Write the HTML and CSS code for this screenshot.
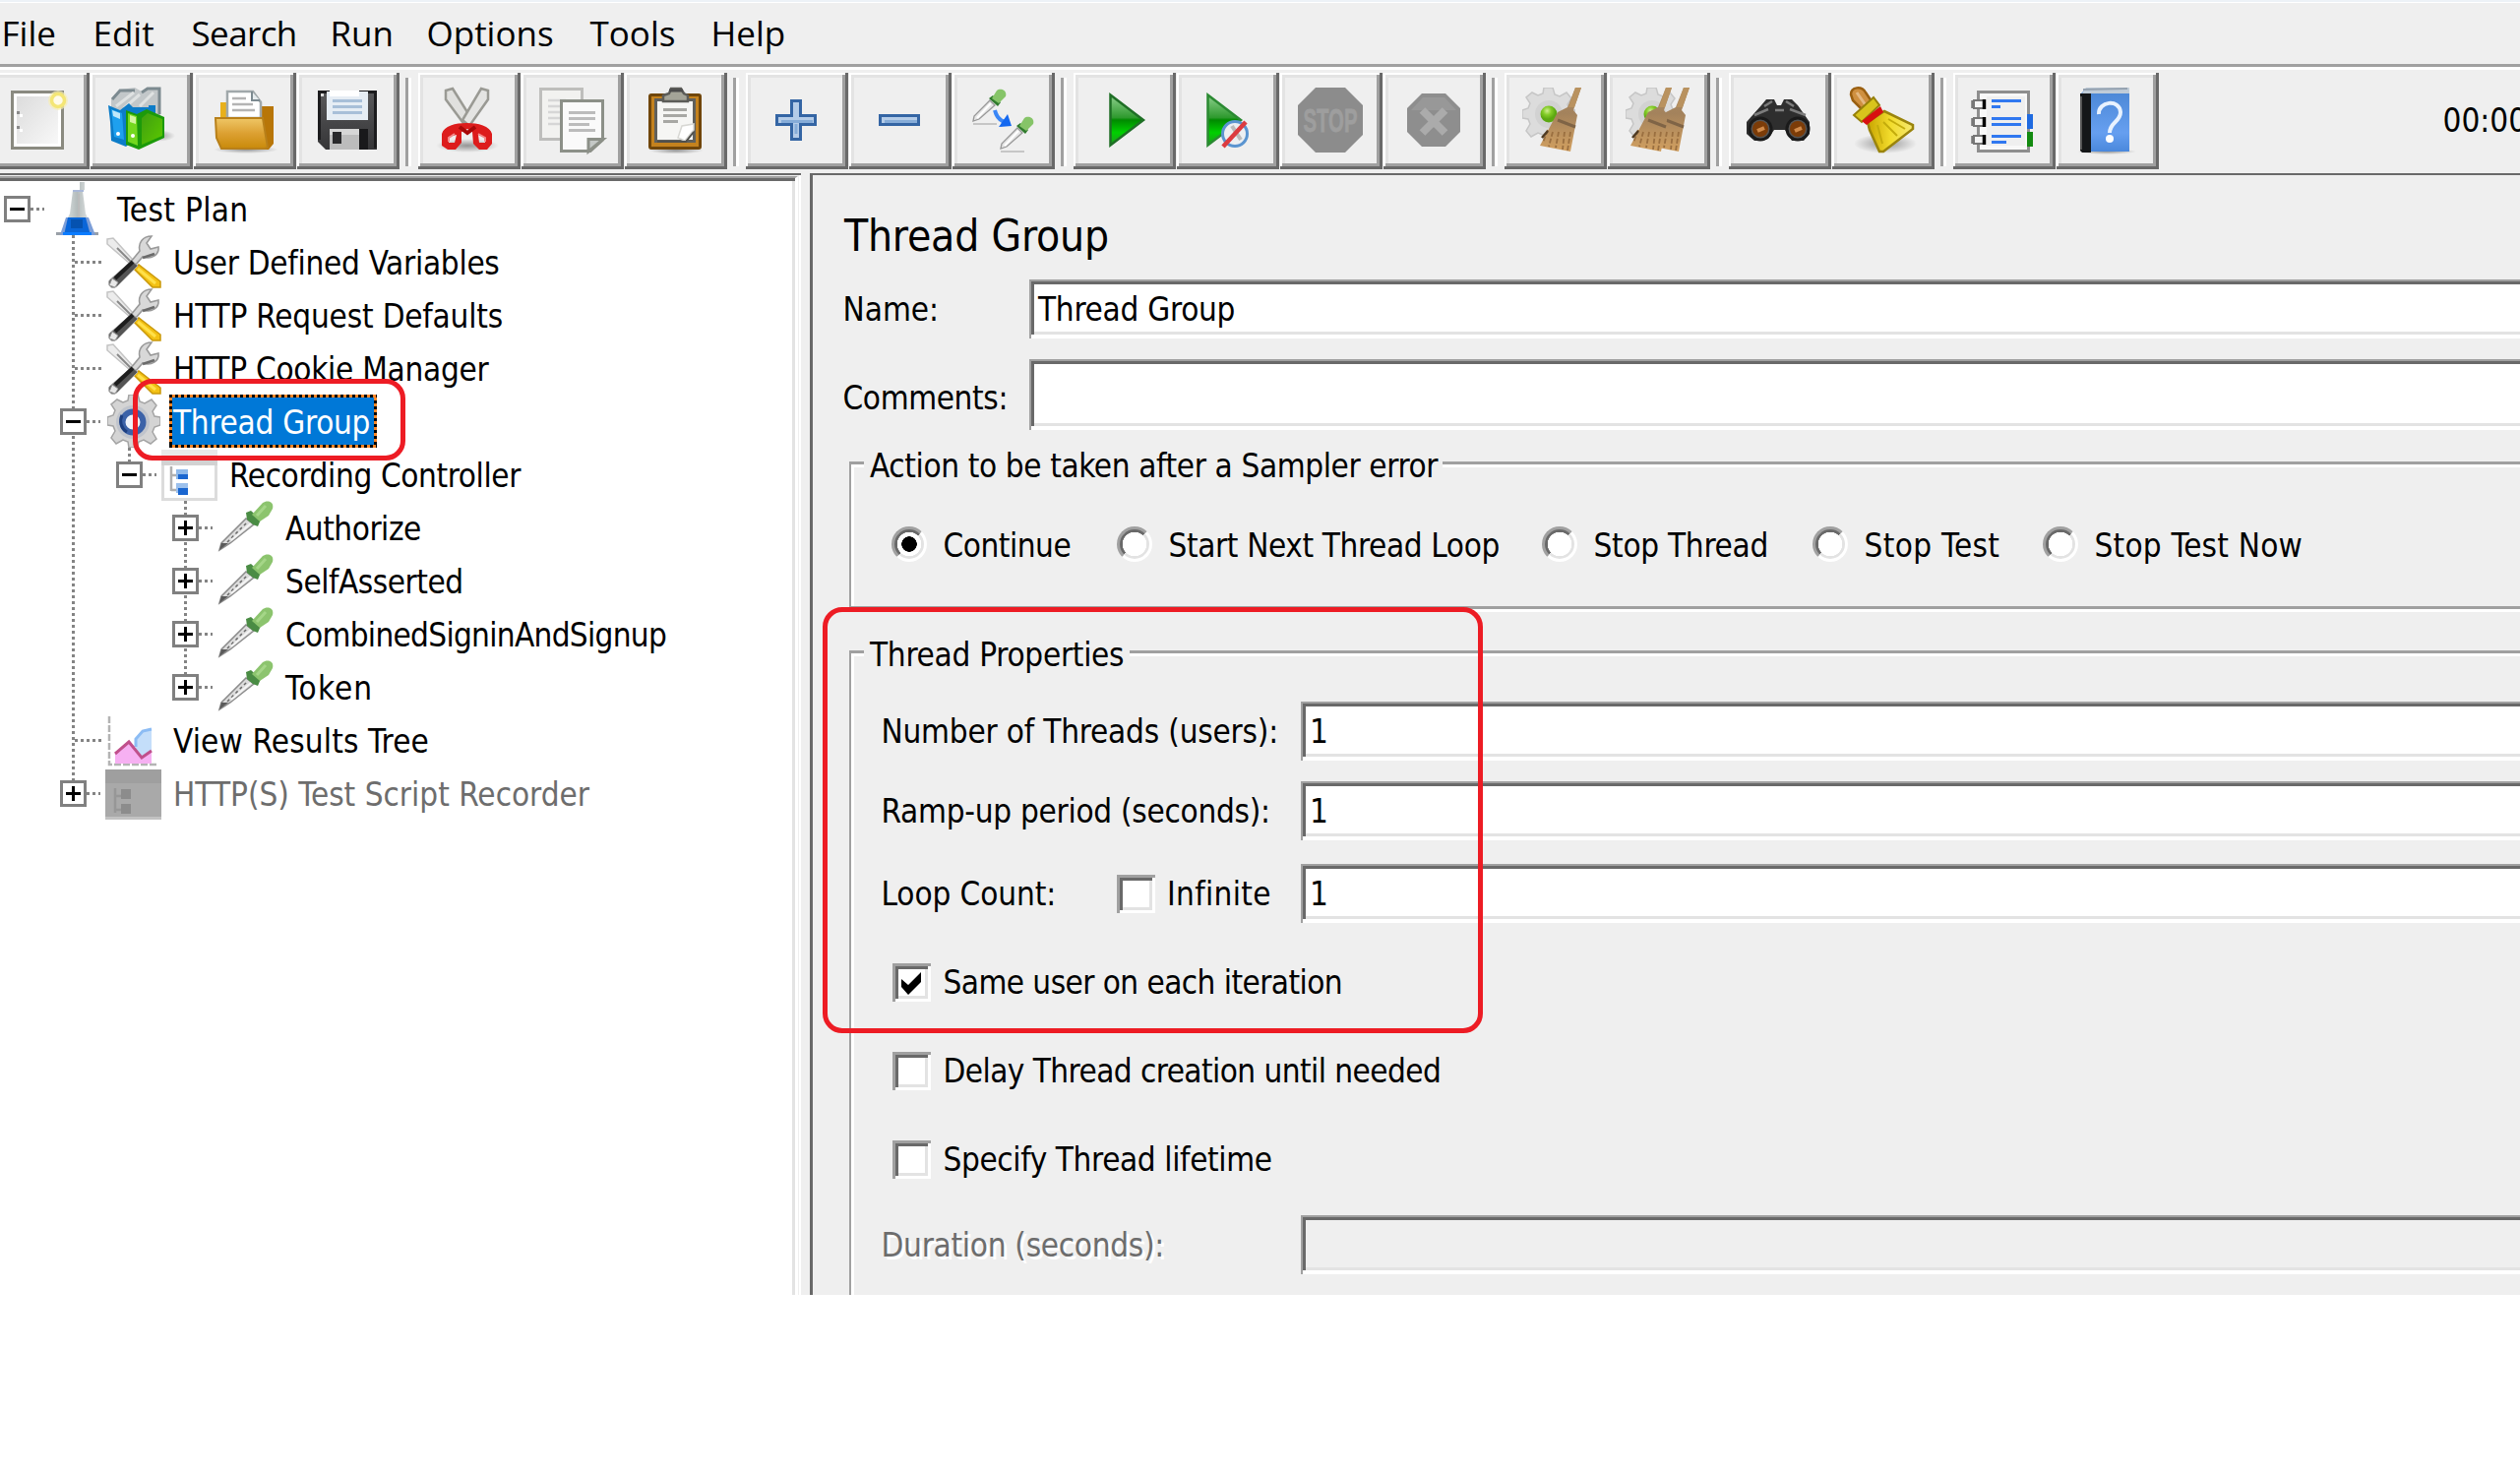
FILE: index.html
```html
<!DOCTYPE html>
<html lang="en">
<head>
<meta charset="utf-8">
<title>Apache JMeter</title>
<link rel="stylesheet" href="styles.css">
</head>
<body>
<svg class="defs" width="0" height="0" aria-hidden="true">
  <defs>
    <linearGradient id="g-green" x1="0" y1="0" x2="0" y2="1"><stop offset="0" stop-color="#8fd08f"/><stop offset=".45" stop-color="#2e9a2e"/><stop offset=".5" stop-color="#008a00"/><stop offset=".75" stop-color="#00d000"/><stop offset="1" stop-color="#1e9a1e"/></linearGradient>
    <linearGradient id="g-folder" x1="0" y1="0" x2="0" y2="1"><stop offset="0" stop-color="#efc766"/><stop offset=".5" stop-color="#dca032"/><stop offset="1" stop-color="#c98a0a"/></linearGradient>
    <linearGradient id="g-doc" x1="0" y1="0" x2="1" y2="1"><stop offset="0" stop-color="#dcdcdc"/><stop offset="1" stop-color="#f8f8f8"/></linearGradient>
    <linearGradient id="g-blue" x1="0" y1="0" x2="0" y2="1"><stop offset="0" stop-color="#4a86d4"/><stop offset=".7" stop-color="#669ff0"/><stop offset="1" stop-color="#4a88dc"/></linearGradient>
    <linearGradient id="g-disc" x1="0" y1="0" x2="0" y2="1"><stop offset="0" stop-color="#5a5a5c"/><stop offset="1" stop-color="#353537"/></linearGradient>
    <linearGradient id="g-glass" x1="0" y1="0" x2="1" y2="0"><stop offset="0" stop-color="#eef2f2"/><stop offset=".5" stop-color="#b4bcbc"/><stop offset="1" stop-color="#f2f4f4"/></linearGradient>
    <linearGradient id="g-bin" x1="0" y1="0" x2="1" y2="1"><stop offset="0" stop-color="#3f9f10"/><stop offset="1" stop-color="#5cc800"/></linearGradient>
    <linearGradient id="g-broom" x1="0" y1="0" x2="1" y2="0"><stop offset="0" stop-color="#c8a400"/><stop offset=".5" stop-color="#f2dc2c"/><stop offset="1" stop-color="#f6e870"/></linearGradient>
    <radialGradient id="g-ball" cx=".4" cy=".3"><stop offset="0" stop-color="#d0ee90"/><stop offset=".5" stop-color="#84cc28"/><stop offset="1" stop-color="#5ca812"/></radialGradient>
    <radialGradient id="g-shadow"><stop offset="0" stop-color="#000" stop-opacity=".38"/><stop offset="1" stop-color="#000" stop-opacity="0"/></radialGradient>
    <linearGradient id="g-straw" x1="0" y1="0" x2="0" y2="1"><stop offset="0" stop-color="#b08e64"/><stop offset=".4" stop-color="#a3825c"/><stop offset="1" stop-color="#d2a060"/></linearGradient>

    <symbol id="mini-dropper" viewBox="0 0 36 37">
      <path d="M2 36H26" stroke="#b8b8b8" stroke-width="1.5"/>
      <path d="M2 33L3 28L19 12L24 17L8 31Z" fill="#e6e6e6" stroke="#989898" stroke-width="1.3"/>
      <path d="M6 30L20 15" stroke="#fff" stroke-width="2"/>
      <path d="M18 10L22 7L30 14L27 18Z" fill="#2f7a2c"/>
      <path d="M21 10L26 2C29 -1 37 1 35 8L28 15Z" fill="#86c468"/>
    </symbol>

    <symbol id="gear-shape" viewBox="0 0 54 54">
      <path d="M22 0H31L33 7L38 9L45 5L50 11L46 17L48 22L54 23V31L48 33L46 38L50 45L44 50L37 46L32 48L30 54H22L21 48L16 46L9 50L4 44L8 37L6 32L0 31V23L6 21L8 16L4 10L10 5L16 8L21 6Z"/>
    </symbol>

    <symbol id="straw-broom" viewBox="0 0 46 68">
      <path d="M38 1L44 1L36 24L40 29L33 66L2 60L20 26L30 21Z" fill="url(#g-straw)"/>
      <path d="M38 1L44 1L37 21L31 21Z" fill="#b9925f"/>
      <path d="M20 34L38 41" stroke="#7f6446" stroke-width="3"/>
      <path d="M10 44L5 57M15 46L11 61M21 46L18 62M27 46L25 64M33 46L30 65" stroke="#9a6f40" stroke-width="1.8" stroke-dasharray="5 2"/>
      <path d="M4 52L10 45" stroke="#4f3a22" stroke-width="2.5"/>
    </symbol>

    <symbol id="i-tools" viewBox="0 0 57 54">
      <path d="M2 4L8 3L28 25L25 29L2 9Z" fill="#ececec" stroke="#c4c4c4" stroke-width="1.5"/>
      <path d="M12 13L28 29" stroke="#888" stroke-width="2"/>
      <path d="M29 34L34 30L56 47V53H48Z" fill="#f3c114" stroke="#c9980a" stroke-width="1.5"/>
      <path d="M33 34L51 49" stroke="#ffe04a" stroke-width="3"/>
      <path d="M35 16C33 8 38 1 47 1L42 8L46 14L54 12C55 20 47 25 38 22L30 31L26 27Z" fill="#d8d8d8" stroke="#9a9a9a" stroke-width="1.6"/>
      <path d="M38 23L50 19" stroke="#6a6a6a" stroke-width="2.5"/>
      <path d="M27 26L33 31L13 51C8 56 2 53 4 46Z" fill="#555" stroke="#aaa" stroke-width="1"/>
      <path d="M10 44L28 27" stroke="#1e1e1e" stroke-width="4"/>
      <path d="M4 51L7 44L13 48L10 53Z" fill="#e8e8e8" stroke="#999"/>
    </symbol>

    <symbol id="i-dropper" viewBox="0 0 57 54">
      <path d="M2 50L4 43L29 18L37 24L13 43Z" fill="#dcdcdc" stroke="#8c8c8c" stroke-width="1.5"/>
      <path d="M10 42L30 22" stroke="#6a6a6a" stroke-width="1.5" stroke-dasharray="3 3"/>
      <path d="M14 40L34 23" stroke="#f4f4f4" stroke-width="2"/>
      <path d="M2 50L4 43L11 43Z" fill="#5a5a5a"/>
      <path d="M29 12L34 10L44 19L41 26L36 24L30 19Z" fill="#4a8c44"/>
      <path d="M35 14L46 2C50 -1 58 0 56 8L52 15L43 21Z" fill="#8cc46e"/>
      <path d="M40 15L49 5" stroke="#a5d688" stroke-width="3"/>
    </symbol>
  </defs>
</svg>

<div class="app">
  <nav class="menubar">
    <span>File</span><span>Edit</span><span class="search">Search</span><span>Run</span><span>Options</span><span>Tools</span><span>Help</span>
  </nav>

  <div class="toolbar">
    <button class="tool"><svg viewBox="0 0 104 98">
      <rect x="25.500" y="19.500" width="51" height="57" fill="#fff" stroke="#8a8a80" stroke-width="3"/>
      <rect x="30" y="24" width="42" height="48" fill="url(#g-doc)"/>
      <path d="M30 39h3v3h-3zM30 54h3v3h-3z" fill="#8a8a8a"/><path d="M33 42h3v3h-3zM33 57h3v3h-3z" fill="#fff"/>
      <circle cx="72" cy="28" r="10" fill="#f6eeb0" opacity=".7"/><circle cx="72" cy="28" r="6.500" fill="#fffbe8" stroke="#f4e676" stroke-width="3.500"/>
    </svg></button>
    <button class="tool"><svg viewBox="0 0 104 98">
      <ellipse cx="68" cy="64" rx="18" ry="6" fill="url(#g-shadow)"/>
      <path d="M21 36V27L30 17L45 15L52 19L57 15H71V45H21Z" fill="#c2c7c9"/>
      <path d="M22 27L30 18H45M52 20L58 16H70V42" stroke="#7c8a90" stroke-width="3" fill="none"/>
      <path d="M26 34L44 20M34 36L50 22M50 34L64 20" stroke="#dfe2e2" stroke-width="3" fill="none"/>
      <path d="M18 33L30 38L39 31L43 35H59V33H66V50L36 75L21 69L20 50Z" fill="#0c7cc8"/>
      <path d="M21 37L32 41L34 68L24 65Z" fill="#1ea0ee"/><path d="M22 38L30 41V47L23 44Z" fill="#c0e8fa"/><circle cx="28" cy="62" r="2" fill="#fff"/>
      <path d="M36 38L47 42L57 37L75 45V66L49 78L36 73Z" fill="#1c9a0a"/>
      <path d="M38 41L47 44L48 74L38 70Z" fill="#74d81e"/><path d="M40 43L46 45V52L40 50Z" fill="#d4f4a0"/>
      <path d="M52 46L58 41L73 47V64L52 73Z" fill="url(#g-bin)"/><circle cx="43" cy="64" r="2" fill="#fff"/>
    </svg></button>
    <button class="tool"><svg viewBox="0 0 104 98">
      <ellipse cx="53" cy="78" rx="33" ry="4" fill="url(#g-shadow)"/>
      <path d="M27 46V30H34V34L70 34H81V72L76 78H66Z" fill="#b87608"/><path d="M27 46V30H33V46Z" fill="#e8b01c"/>
      <path d="M34 46V19H60L68 30V46Z" fill="#fff" stroke="#a0a8aa" stroke-width="2.500"/><path d="M59 19V28H67" fill="#e6ecee" stroke="#7c8a90" stroke-width="2"/>
      <path d="M39 26H53M39 32H60M39 38H62" stroke="#b4b4b4" stroke-width="2.500"/>
      <path d="M22 46H70L75 76L72 77H28L23 66Z" fill="url(#g-folder)" stroke="#b8801a" stroke-width="2"/>
    </svg></button>
    <button class="tool"><svg viewBox="0 0 104 98">
      <path d="M21 18H81V78H29L21 70Z" fill="url(#g-disc)"/><path d="M22.500 68V19.500H79.500V76.500" fill="none" stroke="#1c1c1e" stroke-width="3"/>
      <rect x="30" y="19" width="42" height="29" fill="#e6edf4"/><rect x="33" y="18" width="30" height="6" fill="#fff"/>
      <path d="M36 28.500H66M36 34.500H66M36 40.500H66" stroke="#a8bfd8" stroke-width="3"/>
      <rect x="33" y="57" width="33" height="21" fill="#bcbcbc"/><path d="M33 57H63V63H33Z" fill="#d6d6d6"/><rect x="36" y="60" width="9" height="12" fill="#2a2a2c"/><rect x="63" y="57" width="9" height="21" fill="#19191b"/>
      <rect x="24" y="21" width="3" height="3" fill="#ddd"/>
    </svg></button>
    <i class="sep"></i>
    <button class="tool"><svg viewBox="0 0 104 98">
      <ellipse cx="50" cy="74" rx="32" ry="7" fill="url(#g-shadow)"/>
      <path d="M28 18L35 16L55 48L48 54L28 27Z" fill="#e0e0de" stroke="#9a9a94" stroke-width="2.500"/>
      <path d="M71 18L64 16L45 48L52 54L71 27Z" fill="#e4e4e2" stroke="#9a9a94" stroke-width="2.500"/>
      <path fill-rule="evenodd" d="M24 62C26 54 38 51 49 51C61 51 73 54 75 62V72L70 78H62L56 72L55 60L50 57L44 60V71L38 78H30L24 74ZM31 65V71H37L39 63ZM61 63L62 71H68V66Z" fill="#dd1c1c"/>
      <path d="M42 55L50 61L58 55" stroke="#a80808" stroke-width="4" fill="none"/><path d="M31 70V66L37 62M68 70V66L61 62" stroke="#f48a8a" stroke-width="2" fill="none"/>
    </svg></button>
    <button class="tool"><svg viewBox="0 0 104 98">
      <rect x="19.500" y="16.500" width="42" height="51" fill="#f2f2f0" stroke="#bebebc" stroke-width="3"/><path d="M27 28H45M27 34H45M27 40H45M27 46H45M27 52H40" stroke="#d6d6d6" stroke-width="2.500"/>
      <path d="M40.500 28.500H82.500V68L70 79.500H40.500Z" fill="#fafafa" stroke="#8c9088" stroke-width="3"/><path d="M48 40.500H75M48 46.500H75M48 52.500H69M48 58.500H75" stroke="#bcbcbc" stroke-width="3"/>
      <path d="M68 80V67.500H83Z" fill="#c4c8c6" stroke="#8c9088" stroke-width="3"/>
    </svg></button>
    <button class="tool"><svg viewBox="0 0 104 98">
      <ellipse cx="52" cy="79" rx="28" ry="3.500" fill="url(#g-shadow)"/>
      <rect x="25.500" y="22.500" width="51" height="54" rx="1.500" fill="#c4821e" stroke="#70460a" stroke-width="3"/>
      <rect x="31.500" y="27.500" width="39" height="42" fill="#f6f6f4" stroke="#60605c" stroke-width="3"/>
      <path d="M39 37.500H63M39 43.500H63M39 49.500H54" stroke="#a8a8a4" stroke-width="3"/>
      <path d="M54 66L58 54L70 52V58L61 69Z" fill="#fff" stroke="#d8d8d4" stroke-width="1.500"/><path d="M33 70L62 70L70 60" stroke="#50504c" stroke-width="2" fill="none"/>
      <path d="M39 29V23L45 21L47 16H57L60 21L64 23V29Z" fill="#a4a498" stroke="#5c5c58" stroke-width="2.500"/><path d="M45 18H59" stroke="#4c4c4c" stroke-width="3"/>
    </svg></button>
    <i class="sep"></i>
    <button class="tool"><svg viewBox="0 0 104 98">
      <path d="M46.500 28.500H55.500V43.500H70.500V52.500H55.500V67.500H46.500V52.500H31.500V43.500H46.500Z" fill="#b4cce8" stroke="#3465a4" stroke-width="3"/><path d="M36 49.500H68M51 52V62" stroke="#86acd8" stroke-width="3"/>
    </svg></button>
    <button class="tool"><svg viewBox="0 0 104 98">
      <rect x="31.500" y="43.500" width="39" height="9" fill="#b4cce8" stroke="#3465a4" stroke-width="3"/><path d="M36 49.500H69" stroke="#86acd8" stroke-width="3"/>
    </svg></button>
    <button class="tool"><svg viewBox="0 0 104 98">
      <use href="#mini-dropper" x="19" y="16" width="36" height="37"/><use href="#mini-dropper" x="47" y="44" width="36" height="37"/>
      <path d="M43 38C45 46 49 49 54 50" fill="none" stroke="#3a86f6" stroke-width="4"/><path d="M56 42L60 54L47 55Z" fill="#1468f0"/>
    </svg></button>
    <i class="sep"></i>
    <button class="tool"><svg viewBox="0 0 104 98"><path d="M37.500 22.500L71 48L37.500 73.500Z" fill="url(#g-green)" stroke="#1f6f26" stroke-width="2.500"/></svg></button>
    <button class="tool"><svg viewBox="0 0 104 98"><path d="M31.500 22.500L65 48L31.500 73.500Z" fill="url(#g-green)" stroke="#2b8a32" stroke-width="2.500"/>
      <circle cx="59" cy="62" r="12.500" fill="#eceff2" stroke="#5a94d0" stroke-width="3"/><path d="M56 54L65 68" stroke="#bbb" stroke-width="4"/><path d="M47 75L70 50" stroke="#dc3c40" stroke-width="4.500"/>
    </svg></button>
    <button class="tool"><svg viewBox="0 0 104 98">
      <path d="M36 15H66L84 33V63L66 81H36L18 63V33Z" fill="#8c8c8c"/><text class="stop-word" x="51" y="60" textLength="55" lengthAdjust="spacingAndGlyphs">STOP</text>
    </svg></button>
    <button class="tool"><svg viewBox="0 0 104 98">
      <path d="M39 21H63L78 36V60L63 75H39L24 60V36Z" fill="#8e8e8e"/><path d="M40 25H62L74 38H28Z" fill="#989898"/><path d="M39.500 38L62.500 61M62.500 38L39.500 61" stroke="#ababab" stroke-width="8"/>
    </svg></button>
    <i class="sep"></i>
    <button class="tool"><svg viewBox="0 0 104 98">
      <use href="#gear-shape" x="18" y="15" width="54" height="54" fill="#dcdcdc" stroke="#c6c6c6" stroke-width="1.500"/><circle cx="45" cy="42" r="14" fill="#d2d2d2"/><circle cx="45" cy="42" r="8.500" fill="url(#g-ball)"/>
      <use href="#straw-broom" x="34" y="14" width="46" height="68"/>
    </svg></button>
    <button class="tool"><svg viewBox="0 0 104 98">
      <use href="#gear-shape" x="18" y="15" width="54" height="54" fill="#dcdcdc" stroke="#c6c6c6" stroke-width="1.500"/><circle cx="45" cy="42" r="14" fill="#d2d2d2"/><circle cx="45" cy="42" r="8.500" fill="url(#g-ball)"/>
      <use href="#straw-broom" x="39" y="14" width="46" height="68"/><use href="#straw-broom" x="21" y="14" width="46" height="68"/>
    </svg></button>
    <i class="sep"></i>
    <button class="tool"><svg viewBox="0 0 104 98">
      <path d="M33 33L38 27H46L49 33H53L56 27H64L70 33L82 50V62L76 69H64L57 58H46L40 67L34 69H26L18 62V50Z" fill="#2e2e2e"/>
      <path d="M36 34L44 29M58 29L66 34M26 43L40 37M62 37L78 43M47 38H56" stroke="#7c7c7c" stroke-width="2.500"/>
      <circle cx="32" cy="57" r="11" fill="#555" stroke="#1a1a1a" stroke-width="3"/><circle cx="70" cy="57" r="11" fill="#555" stroke="#1a1a1a" stroke-width="3"/>
      <circle cx="32" cy="57" r="8" fill="#7c3c08"/><circle cx="70" cy="57" r="8" fill="#7c3c08"/><path d="M29 59L36 56M67 59L74 56" stroke="#d08a4a" stroke-width="4"/>
    </svg></button>
    <button class="tool"><svg viewBox="0 0 104 98">
      <ellipse cx="54" cy="72" rx="32" ry="10" fill="url(#g-shadow)"/>
      <path d="M19 22C19 14 30 13 34 20L42 32L32 39L21 28Z" fill="#cf9040" stroke="#9a5f10" stroke-width="2.500"/><path d="M25 20L34 33" stroke="#e4b880" stroke-width="3"/>
      <path d="M22 43L42 25L48 33L30 50Z" fill="#d8c41c" stroke="#96800a" stroke-width="2"/>
      <path d="M36 50L53 39L82 53V57L52 80H48L38 58Z" fill="url(#g-broom)" stroke="#9a840c" stroke-width="2.500"/><path d="M46 53L51 72M52 50L66 64M57 47L74 57" stroke="#c4ac0c" stroke-width="2"/>
      <path d="M30 49L49 34L52 40L35 53Z" fill="#d81010"/>
    </svg></button>
    <i class="sep"></i>
    <button class="tool"><svg viewBox="0 0 104 98">
      <rect x="25.500" y="19.500" width="51" height="60" fill="#f8f8f8" stroke="#8e8e8e" stroke-width="3"/><rect x="34" y="24" width="39" height="50" fill="#efefef"/>
      <path d="M39 28.500H69M39 34.500H48M39 46.500H69M39 52.500H69M39 64.500H69M39 70.500H54" stroke="#3078f0" stroke-width="3"/>
      <path d="M75 42H81V57H75Z" fill="#1f6ae0"/><path d="M75 60H81V75H75Z" fill="#138a10"/>
      <g fill="#f4f4f4" stroke="#777" stroke-width="2"><path d="M21 28H31V36H21ZM21 46H31V54H21ZM21 64H31V72H21Z"/></g>
      <path d="M31.500 27V37M31.500 45V55M31.500 63V73" stroke="#000" stroke-width="3.500"/><path d="M20 28V36M20 46V54M20 64V72" stroke="#777" stroke-width="3.500"/>
    </svg></button>
    <button class="tool"><svg viewBox="0 0 104 98">
      <ellipse cx="51" cy="80" rx="30" ry="3" fill="url(#g-shadow)"/>
      <path d="M24 22L30 16H74V80H26L24 78Z" fill="url(#g-blue)"/><path d="M24 21H35V81H26L24 79Z" fill="#141618"/><path d="M25 24V78" stroke="#555" stroke-width="2"/>
      <path d="M26 21L30 15H74V21Z" fill="#c0ccd8"/><path d="M27 17L72 16" stroke="#95a2b0" stroke-width="2"/>
      <path d="M43 42C42 29 64 26 65 40C65 50 54 50 54 61" fill="none" stroke="#e8f2ff" stroke-width="4"/><circle cx="54" cy="67" r="4" fill="#fff"/>
    </svg></button>
    <span class="clock">00:00:00</span>
  </div>

  <div class="workspace">
    <aside class="tree-pane">
      <ul class="tree">
        <li><i class="node root minus"></i>
          <svg class="icon" viewBox="0 0 57 54"><path d="M24 8H31V0H36V8L34 9L37 32L46 52H11L21 32L24 9Z" fill="url(#g-glass)"/><path d="M24 9H35" stroke="#a9b8d8" stroke-width="2"/><path d="M30 12V36" stroke="#bbb" stroke-width="2"/><path d="M7 52.500H50" stroke="#9aa0a8" stroke-width="3"/><path d="M17 36H40L47 54H11Z" fill="#7c9ed8"/><path d="M19 36H37L42 54H15Z" fill="#0a66d8"/><path d="M22 38H34V47H22Z" fill="#0552b0"/><path d="M14 51H43V54H14Z" fill="#0a7cff"/></svg>
          <span class="label wide-3">Test Plan</span></li>
        <li><i class="node root"></i><i class="node line tee"></i><svg class="icon" viewBox="0 0 57 54"><use href="#i-tools"/></svg><span class="label tight-3">User Defined Variables</span></li>
        <li><i class="node root"></i><i class="node line tee"></i><svg class="icon" viewBox="0 0 57 54"><use href="#i-tools"/></svg><span class="label tight-2">HTTP Request Defaults</span></li>
        <li><i class="node root"></i><i class="node line tee"></i><svg class="icon" viewBox="0 0 57 54"><use href="#i-tools"/></svg><span class="label tight-3">HTTP Cookie Manager</span></li>
        <li><i class="node root"></i><i class="node line minus"></i>
          <svg class="icon" viewBox="0 0 57 54"><use href="#gear-shape" x="2" y="0" width="54" height="54" fill="#d4d4d4" stroke="#a4a4a4" stroke-width="1.500"/><circle cx="28" cy="28" r="17" fill="#c0c4cc"/><circle cx="28" cy="28" r="10.500" fill="#eef2fa" stroke="#3c62a8" stroke-width="6"/><path d="M17 21A13 13 0 0 0 22 38" stroke="#1d3f80" stroke-width="3" fill="none"/></svg>
          <span class="label selected tight-3">Thread Group</span></li>
        <li><i class="node root"></i><i class="node line"></i><i class="node line last minus"></i>
          <svg class="icon" viewBox="0 0 57 54"><rect x="1.500" y="4.500" width="54" height="48" fill="#fff" stroke="#dcdcdc" stroke-width="3"/><rect x="0" y="2" width="57" height="16" fill="#e8e8e8"/><rect x="0" y="13" width="57" height="5" fill="#d2d2d2"/><path d="M10 19V44M10 28H16M10 43H16" stroke="#b0b0b0" stroke-width="2.500" fill="none"/><path d="M15 22H27V32H15Z" fill="#8fb9ea"/><path d="M17 27H27V32H17Z" fill="#1a66d0"/><path d="M15 36H27V46H15Z" fill="#9cc0ec"/><path d="M17 41H27V48H17Z" fill="#1a66d0"/></svg>
          <span class="label tight-4">Recording Controller</span></li>
        <li><i class="node root"></i><i class="node line"></i><i class="node"></i><i class="node line plus"></i><svg class="icon" viewBox="0 0 57 54"><use href="#i-dropper"/></svg><span class="label tight-5">Authorize</span></li>
        <li><i class="node root"></i><i class="node line"></i><i class="node"></i><i class="node line plus"></i><svg class="icon" viewBox="0 0 57 54"><use href="#i-dropper"/></svg><span class="label tight-5">SelfAsserted</span></li>
        <li><i class="node root"></i><i class="node line"></i><i class="node"></i><i class="node line plus"></i><svg class="icon" viewBox="0 0 57 54"><use href="#i-dropper"/></svg><span class="label tight-7">CombinedSigninAndSignup</span></li>
        <li><i class="node root"></i><i class="node line"></i><i class="node"></i><i class="node line last plus"></i><svg class="icon" viewBox="0 0 57 54"><use href="#i-dropper"/></svg><span class="label wide-9">Token</span></li>
        <li><i class="node root"></i><i class="node line tee"></i>
          <svg class="icon" viewBox="0 0 57 54"><path d="M4 3V52H52" stroke="#b4b4b4" stroke-width="2.500" fill="none" stroke-dasharray="7 2"/><path d="M31 44V26L38 17L47 15V45Z" fill="#c4defa"/><path d="M31 34V26L38 18L47 16" stroke="#8cbcf4" stroke-width="3" fill="none"/><path d="M10 51V41L24 30L37 44L47 39V51Z" fill="#f6b0f2"/><path d="M10 41L24 29L37 45L47 38" stroke="#c0508c" stroke-width="3" fill="none"/></svg>
          <span class="label wide-1">View Results Tree</span></li>
        <li><i class="node root"></i><i class="node line last plus"></i>
          <svg class="icon" viewBox="0 0 57 54"><rect y="3" width="57" height="51" fill="#a9a9a9"/><rect y="3" width="57" height="14" fill="#9f9f9f"/><rect y="51" width="57" height="3" fill="#c2c2c2"/><path d="M10 22V47M10 30H16M10 44H16" stroke="#979797" stroke-width="2.500" fill="none"/><path d="M16 23H26V33H16ZM16 38H26V48H16Z" fill="#8c8c8c"/></svg>
          <span class="label off">HTTP(S) Test Script Recorder</span></li>
      </ul>
    </aside>

    <main class="editor">
      <h1 class="tight-2">Thread Group</h1>
      <div class="form-row name-row"><label>Name:</label><div class="field tight-3">Thread Group</div></div>
      <div class="form-row comments-row"><label class="tight-4">Comments:</label><div class="field"></div></div>

      <section class="group action-group">
        <div class="legend tight-4">Action to be taken after a Sampler error</div>
        <div class="radios">
          <span class="radio tight-5"><i class="knob on"></i>Continue</span>
          <span class="radio tight-4"><i class="knob"></i>Start Next Thread Loop</span>
          <span class="radio tight-3"><i class="knob"></i>Stop Thread</span>
          <span class="radio wide-3"><i class="knob"></i>Stop Test</span>
          <span class="radio wide-2"><i class="knob"></i>Stop Test Now</span>
        </div>
      </section>

      <section class="group props-group">
        <div class="legend tight-3">Thread Properties</div>
        <div class="prop-row threads"><label class="tight-2">Number of Threads (users):</label><div class="field">1</div></div>
        <div class="prop-row ramp"><label class="tight-3">Ramp-up period (seconds):</label><div class="field">1</div></div>
        <div class="prop-row loops"><label class="short tight-1">Loop Count:</label><span class="check wide-3"><i class="box"></i>Infinite</span><div class="field">1</div></div>
        <div class="check tight-6"><i class="box"><svg viewBox="0 0 27 27"><path d="M3 10L10 16L23 3V13L10 26L3 18Z"/></svg></i>Same user on each iteration</div>
        <div class="check tight-6"><i class="box"></i>Delay Thread creation until needed</div>
        <div class="check tight-4"><i class="box"></i>Specify Thread lifetime</div>
        <div class="prop-row duration"><label class="off tight-3">Duration (seconds):</label><div class="field disabled"></div></div>
      </section>
    </main>
  </div>

  <div class="callout callout-node"></div>
  <div class="callout callout-props"></div>
</div>
</body>
</html>
```
FILE: styles.css
```css
*, *::before, *::after { box-sizing: border-box; }

body {
  margin: 0;
  background: #fff;
  color: #000;
  font: 33px/40px "DejaVu Sans Condensed", "DejaVu Sans", sans-serif;
  overflow: hidden;
}

i { font-style: normal; }
.defs { position: absolute; }

.app {
  position: relative;
  width: 2561px;
  height: 1316px;
  background: #efefef;
  border-top: 2px solid #edf2f7;
  box-shadow: inset 0 1px #fff;
  overflow: hidden;
  white-space: nowrap;
}

/* Letter fitting */
.tight-1 { letter-spacing: -0.09px; }
.tight-2 { letter-spacing: -0.2px; }
.tight-3 { letter-spacing: -0.28px; }
.tight-4 { letter-spacing: -0.38px; }
.tight-5 { letter-spacing: -0.47px; }
.tight-6 { letter-spacing: -0.56px; }
.tight-7 { letter-spacing: -0.7px; }
.wide-1 { letter-spacing: 0.14px; }
.wide-2 { letter-spacing: 0.2px; }
.wide-3 { letter-spacing: 0.33px; }
.wide-9 { letter-spacing: 1.1px; }

/* Menu */
.menubar {
  display: grid;
  grid-template-columns: 93px 100px 141px 98px 166px 123px 100px;
  height: 69px;
  padding-left: 1.5px;
  border-bottom: 3px solid #fff;
  box-shadow: inset 0 -3px #a0a0a0;
  font: 35px/64px "Open Sans", sans-serif;
}
.menubar .search { letter-spacing: -0.6px; }

/* Toolbar */
.toolbar {
  display: flex;
  height: 105px;
  padding-top: 3px;
  margin-left: -13px;
}
.tool {
  flex: none;
  width: 104px;
  height: 98px;
  margin: 0 1px 0 0;
  padding: 0;
  border: 0;
  background: #efefef;
  box-shadow: inset -3px -3px #696969, inset 2px 2px #fff, inset -6px -6px #a0a0a0, inset 5px 5px #e3e3e3;
}
.tool svg { display: block; width: 104px; height: 98px; }
.stop-word {
  font: 700 33px "Liberation Sans", sans-serif;
  fill: #9e9e9e;
  stroke: #9e9e9e;
  stroke-width: 0.8px;
  text-anchor: middle;
}
.sep {
  flex: none;
  width: 6px;
  height: 90px;
  margin: 5px 7px 0 5px;
  border-left: 3px solid #a0a0a0;
  border-right: 3px solid #fff;
}
.clock { margin: 29px 0 0 287.500px; }

/* Split workspace */
.workspace {
  display: flex;
  gap: 9px;
  height: 1140px;
}
.tree-pane {
  flex: none;
  width: 814px;
  padding: 1px 3px 0 0;
  border-top: 2px solid #696969;
  box-shadow: inset -2px 0 #fff;
}
.tree {
  height: 1200px;
  margin: 0;
  padding: 1px 0 0;
  list-style: none;
  background: #fff;
  border-top: 2px solid #a0a0a0;
  border-right: 3px solid #fff;
  box-shadow: inset 0 3px #696969, inset -3px 0 #e3e3e3;
}
.tree li {
  position: relative;
  display: flex;
  align-items: center;
  height: 54px;
}
.tree li:first-child { margin-top: 3px; }

.node {
  position: relative;
  flex: none;
  width: 57px;
  height: 54px;
}
.node.root { margin-left: -11px; }
.line {
  background: repeating-linear-gradient(to bottom, #848484 0 3px, transparent 3px 6px) 27px 0 / 3px 54px no-repeat;
}
.line.last { background-size: 3px 27px; }
.tee::before,
.minus::before,
.plus::before {
  content: "";
  position: absolute;
  left: 30px;
  top: 26px;
  width: 28px;
  height: 3px;
  background: repeating-linear-gradient(to right, #848484 0 3px, transparent 3px 6px);
}
.minus::before,
.plus::before { width: 26px; }
.minus::after,
.plus::after {
  content: "";
  position: absolute;
  left: 15px;
  top: 14px;
  width: 27px;
  height: 27px;
  border: 3px solid #808080;
  background: linear-gradient(#000, #000) 3px 9px / 15px 3px no-repeat, #fff;
}
.plus::after {
  background: linear-gradient(#000, #000) 3px 9px / 15px 3px no-repeat, linear-gradient(#000, #000) 9px 3px / 3px 15px no-repeat, #fff;
}
.icon { flex: none; width: 57px; height: 54px; margin-left: 4px; }
.label {
  height: 54px;
  margin-left: 8px;
  padding: 1px 5px 0 4px;
  line-height: 55px;
}
.node + .icon + .label.selected {
  width: 211px;
  color: #fff;
  background:
    repeating-linear-gradient(to right, #000 0 3px, #ff8728 3px 6px) 0 0 / 100% 3px no-repeat,
    repeating-linear-gradient(to right, #000 0 3px, #ff8728 3px 6px) 0 100% / 100% 3px no-repeat,
    repeating-linear-gradient(to bottom, #000 0 3px, #ff8728 3px 6px) 0 0 / 3px 100% no-repeat,
    repeating-linear-gradient(to bottom, #000 0 3px, #ff8728 3px 6px) 100% 0 / 3px 100% no-repeat,
    #0078d7;
}
.off { color: #6d6d6d; }

/* Editor */
.editor {
  flex: 1;
  min-width: 0;
  padding-left: 32px;
  border-top: 2px solid #696969;
  box-shadow: inset 3px 0 #696969;
}
h1 {
  height: 60px;
  margin: 31px 0 15px 3px;
  font-size: 44px;
  font-weight: 400;
  line-height: 61px;
}
.form-row { display: flex; align-items: center; }
.form-row label { flex: none; width: 191px; padding: 2px 0 0 1.500px; }
.field {
  flex: 1;
  height: 60px;
  margin-right: -20px;
  padding-left: 9px;
  line-height: 62px;
  background: #fff;
  box-shadow: inset 2px 2px #a0a0a0, inset 0 -4px #fff, inset 5px 5px #696969, inset 0 -7px #e3e3e3;
}
.disabled { background: #efefef; }
.name-row { height: 60px; }
.comments-row { height: 72px; margin-top: 21px; }
.comments-row label { padding-top: 8px; }
.comments-row .field { height: 72px; }

.group {
  margin: 32px -20px 0 8px;
  border: solid #a0a0a0;
  border-width: 3px 0 3px 2px;
  box-shadow: inset 3px 3px #fff, 0 3px #fff;
}
.legend {
  width: 588px;
  height: 40px;
  margin: -19px 0 0 13px;
  padding-left: 6px;
  line-height: 42px;
  background: #efefef;
}
.action-group { height: 150px; }
.radios {
  display: grid;
  grid-template-columns: 229px 432px 275px 234px 300px;
  margin: 41px 0 0 41px;
  line-height: 42px;
}
.radio { display: flex; align-items: center; gap: 16.500px; }
.knob {
  width: 36px;
  height: 36px;
  margin-top: -4px;
  border-radius: 50%;
  background:
    radial-gradient(circle, #fff 0 12px, transparent 12.500px),
    conic-gradient(from 45deg, #e3e3e3 0 50%, #696969 50% 100%);
  border: 3px solid;
  border-color: #a0a0a0 #fff #fff #a0a0a0;
}
.knob.on {
  background:
    radial-gradient(circle, #000 0 7.500px, #fff 8px 12px, transparent 12.500px),
    conic-gradient(from 45deg, #e3e3e3 0 50%, #696969 50% 100%);
}

.props-group { height: 700px; margin-top: 42px; }
.props-group .legend { width: 270px; }
.prop-row { display: flex; align-items: center; margin-left: 29px; height: 60px; }
.prop-row label { flex: none; width: 428px; padding: 2px 0 0 1.500px; }
.prop-row label.short { width: 241px; }
.prop-row .check { width: 187px; margin: 0; gap: 12px; }
.threads { margin-top: 28px; }
.ramp { margin-top: 21px; }
.loops { margin-top: 24px; }
.check {
  flex: none;
  display: flex;
  align-items: center;
  gap: 12.500px;
  height: 39px;
  margin: 51px 0 0 42px;
  line-height: 41px;
}
.loops + .check { margin-top: 41px; }
.box {
  flex: none;
  width: 39px;
  height: 39px;
  padding: 6px;
  background: #fff;
  box-shadow: inset 3px 3px #a0a0a0, inset -3px -3px #fff, inset 6px 6px #696969, inset -6px -6px #e3e3e3;
}
.box svg { display: block; width: 27px; height: 27px; }
.duration { margin-top: 37px; }
.duration label { text-shadow: 3px 3px #fff; }

/* Red annotation outlines */
.callout {
  position: absolute;
  border: 5px solid #ed1c24;
  border-radius: 20px;
}
.callout-node { left: 135px; top: 383px; width: 277px; height: 83px; }
.callout-props { left: 836px; top: 615px; width: 671px; height: 433px; }
```
